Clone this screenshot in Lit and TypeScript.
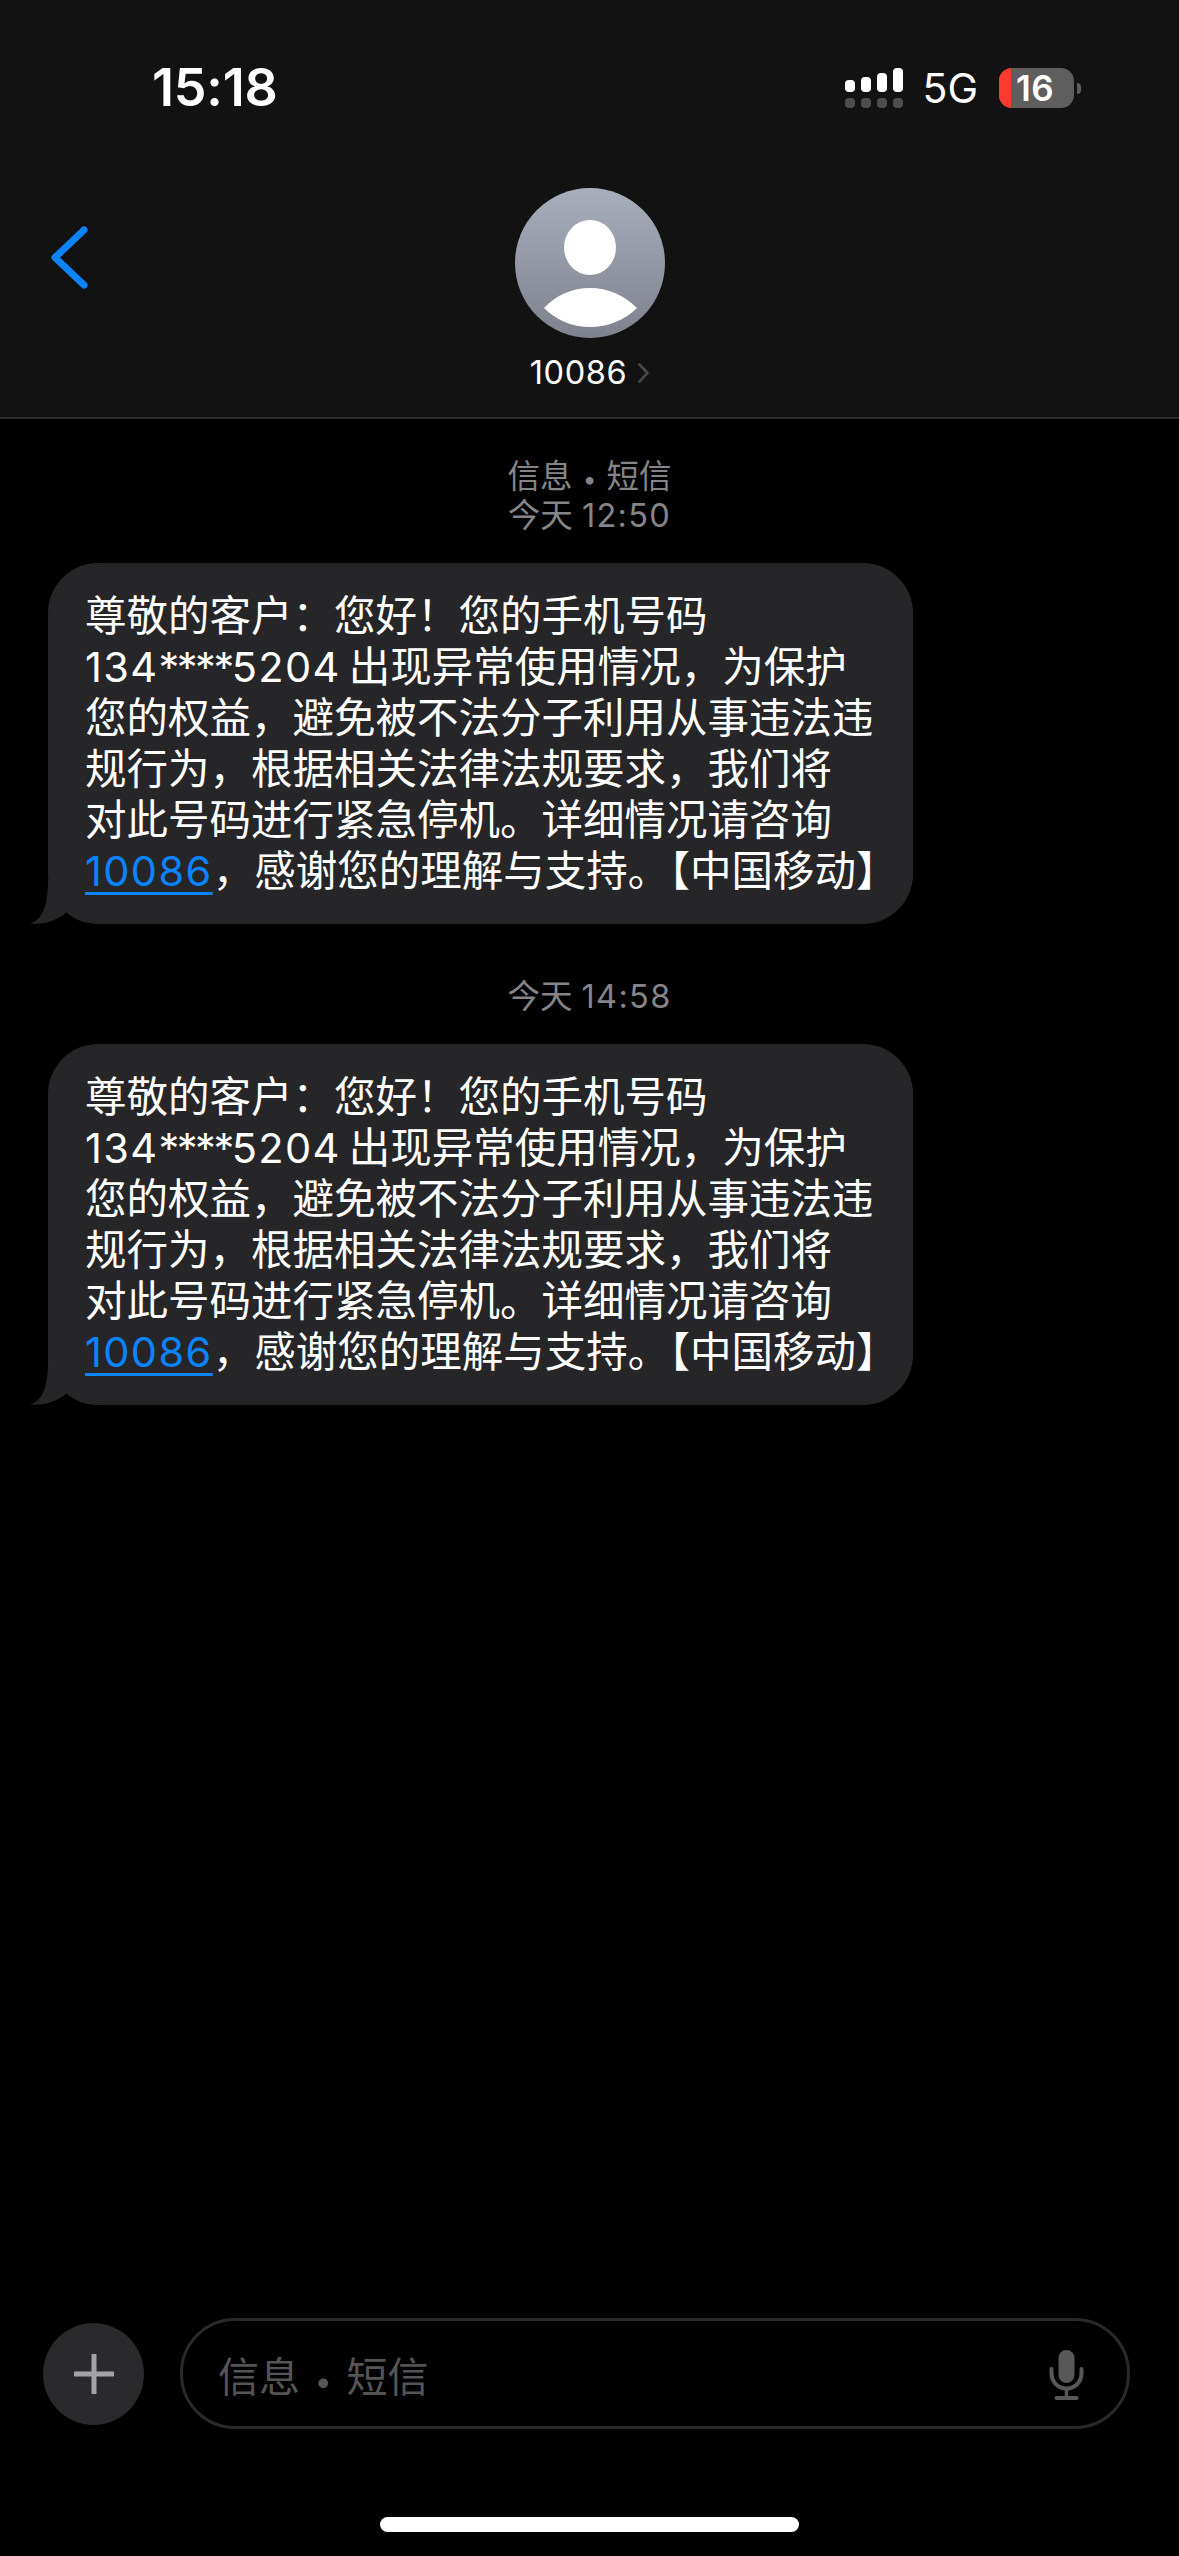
import { LitElement, html, css, svg } from 'lit';
import { customElement } from 'lit/decorators.js';

const BARS = [12, 15, 19, 24];

@customElement('app-root')
export class AppRoot extends LitElement {
  static styles = css`
    :host {
      display: block;
      width: 1179px;
      height: 2556px;
      overflow: hidden;
      background: #000;
      font-family: Inter, 'Noto Sans CJK SC', sans-serif;
      color: #fff;
    }
    .page {
      display: flex;
      flex-direction: column;
      height: 2556px;
    }

    /* header */
    .header {
      height: 417px;
      background: #121212;
      border-bottom: 2px solid #2a2a2a;
      flex: none;
    }
    .status {
      display: flex;
      justify-content: space-between;
      align-items: center;
      height: 48px;
      padding: 64px 98px 0 152px;
    }
    .time {
      font-size: 52px;
      font-weight: 600;
      line-height: 48px;
      letter-spacing: -0.2px;
    }
    .status-right {
      display: flex;
      align-items: center;
    }
    .signal {
      display: flex;
      flex-direction: column;
      gap: 6px;
      margin-right: 19px;
    }
    .signal-row {
      display: flex;
      gap: 6px;
      align-items: flex-end;
      height: 24px;
    }
    .signal-row.low {
      height: 10px;
    }
    .signal-row i {
      display: block;
      width: 10px;
      border-radius: 4px;
      background: #fff;
    }
    .signal-row.low i {
      height: 10px;
      background: #4d4d4d;
    }
    .net {
      font-size: 41px;
      font-weight: 400;
      line-height: 48px;
      margin-right: 21px;
    }
    .battery {
      position: relative;
      width: 75px;
      height: 40px;
      border-radius: 13px;
      overflow: hidden;
      background: #5e5e5e;
      display: flex;
      align-items: center;
      font-size: 35px;
      font-weight: 600;
      line-height: 40px;
      letter-spacing: 0.5px;
    }
    .battery .fill {
      width: 12px;
      height: 40px;
      background: #ff3b30;
      margin-right: 5px;
      flex: none;
    }
    .nub {
      width: 4px;
      height: 11px;
      margin-left: 3px;
      border-radius: 0 6px 6px 0;
      background: #5e5e5e;
    }
    .nav {
      display: grid;
      grid-template-columns: 1fr auto 1fr;
      margin-top: 76px;
    }
    .back {
      margin: 38px 0 0 50px;
      width: 38px;
      height: 63px;
    }
    .contact {
      display: flex;
      flex-direction: column;
      align-items: center;
    }
    .avatar {
      width: 150px;
      height: 150px;
      display: block;
    }
    .name {
      display: flex;
      align-items: center;
      gap: 11px;
      margin-top: 17px;
      font-size: 32.5px;
      line-height: 36px;
      letter-spacing: 0.6px;
    }
    .name svg {
      width: 11px;
      height: 20px;
    }

    /* messages */
    .thread {
      flex: 1;
      padding-top: 38px;
      display: flex;
      flex-direction: column;
    }
    .stamp {
      text-align: center;
      font-size: 32.5px;
      line-height: 39px;
      color: #858589;
    }
    .stamp.later {
      margin-top: 53px;
    }
    .stamp .num {
      letter-spacing: 1.3px;
    }
    .dot {
      font-size: 0.75em;
      line-height: 0;
      margin: 0 0.04em;
    }
    .bubble {
      position: relative;
      box-sizing: border-box;
      width: 865px;
      margin: 28px 0 0 48px;
      padding: 28px 0 27px 37px;
      border-radius: 50px;
      background: #262628;
      font-size: 41.5px;
      line-height: 51px;
      white-space: nowrap;
    }
    .bubble .line {
      display: block;
    }
    .num {
      letter-spacing: 1.4px;
    }
    .stars {
      letter-spacing: -2.5px;
    }
    .sp {
      margin-right: 8px;
    }
    .tail {
      position: absolute;
      left: -18px;
      bottom: 0;
      width: 40px;
      height: 44px;
    }
    .link {
      color: #0a84ff;
      text-decoration: underline;
      text-decoration-thickness: 3px;
      text-underline-offset: 6px;
      text-decoration-skip-ink: none;
    }

    /* composer */
    .composer {
      flex: none;
      display: flex;
      align-items: center;
      gap: 36px;
      padding: 0 49px 0 43px;
    }
    .plus {
      width: 101px;
      height: 102px;
      border-radius: 50%;
      background: #2a2a2c;
      display: flex;
      align-items: center;
      justify-content: center;
      flex: none;
    }
    .plus svg {
      width: 40px;
      height: 40px;
    }
    .input {
      flex: 1;
      box-sizing: border-box;
      height: 111px;
      border: 3px solid #2a2a2c;
      border-radius: 55px;
      display: flex;
      align-items: center;
      justify-content: space-between;
      padding: 0 42px 0 35px;
      font-size: 41px;
      color: #555557;
    }
    .input .dot {
      margin: 0 0.1em;
    }
    .mic {
      width: 36px;
      height: 50px;
      margin-top: 3px;
    }
    .home {
      flex: none;
      width: 419px;
      height: 15px;
      border-radius: 8px;
      background: #fff;
      margin: 88px auto 24px;
    }
  `;

  renderBubble() {
    return html`<div class="bubble">
      <span class="line">尊敬的客户：您好！您的手机号码</span>
      <span class="line"><span class="num">134</span><span class="stars">****</span><span class="num sp">5204</span>出现异常使用情况，为保护</span>
      <span class="line">您的权益，避免被不法分子利用从事违法违</span>
      <span class="line">规行为，根据相关法律法规要求，我们将</span>
      <span class="line">对此号码进行紧急停机。详细情况请咨询</span>
      <span class="line"><span class="link num">10086</span>，感谢您的理解与支持。【中国移动】</span>
      <svg class="tail" viewBox="0 0 40 44">
        <path d="M18 0C18 22 14 40 0 43.5C14 45 28 40 37 32L40 0Z" fill="#262628" />
      </svg>
    </div>`;
  }

  render() {
    return html`<div class="page">
      <div class="header">
        <div class="status">
          <div class="time">15:18</div>
          <div class="status-right">
            <div class="signal">
              <div class="signal-row">
                ${BARS.map((h) => html`<i style="height:${h}px"></i>`)}
              </div>
              <div class="signal-row low">${BARS.map(() => html`<i></i>`)}</div>
            </div>
            <div class="net">5G</div>
            <div class="battery"><div class="fill"></div>16</div>
            <div class="nub"></div>
          </div>
        </div>
        <div class="nav">
          <svg class="back" viewBox="0 0 38 63">
            <path d="M34 4L5 31.5L34 59" fill="none" stroke="#0a84ff" stroke-width="7" stroke-linecap="round" stroke-linejoin="round" />
          </svg>
          <div class="contact">
            <svg class="avatar" viewBox="0 0 150 150">
              <defs>
                <linearGradient id="av" x1="0" y1="0" x2="0" y2="1">
                  <stop offset="0" stop-color="#a9aebc" />
                  <stop offset="1" stop-color="#7e828e" />
                </linearGradient>
              </defs>
              <circle cx="75" cy="75" r="75" fill="url(#av)" />
              <ellipse cx="75" cy="59.5" rx="26" ry="27.5" fill="#fff" />
              <path d="M29 120C41 107 57 100 75 100C93 100 109 107 122 120C110 132 93 139 75 139C57 139 41 132 29 120Z" fill="#fff" />
            </svg>
            <div class="name">
              10086
              <svg viewBox="0 0 11 20">
                <path d="M1.5 1.5L9.5 10L1.5 18.5" fill="none" stroke="#48484a" stroke-width="2.6" stroke-linecap="round" stroke-linejoin="round" />
              </svg>
            </div>
          </div>
          <div></div>
        </div>
      </div>

      <div class="thread">
        <div class="stamp">信息 <span class="dot">•</span> 短信<br />今天 <span class="num">12:50</span></div>
        ${this.renderBubble()}
        <div class="stamp later">今天 <span class="num">14:58</span></div>
        ${this.renderBubble()}
      </div>

      <div class="composer">
        <div class="plus">
          <svg viewBox="0 0 40 40">
            <path d="M20 1V39M1 20H39" fill="none" stroke="#a3a3a5" stroke-width="5" stroke-linecap="round" />
          </svg>
        </div>
        <div class="input">
          <span>信息 <span class="dot">•</span> 短信</span>
          <svg class="mic" viewBox="0 0 36 50">
            ${svg`
              <rect x="9.5" y="0" width="16" height="33" rx="8" fill="#58585a" />
              <path d="M2.5 19V23C2.5 32 9 38.5 17.5 38.5C26 38.5 32.5 32 32.5 23V19" fill="none" stroke="#58585a" stroke-width="4" stroke-linecap="round" />
              <path d="M17.5 38.5V47" stroke="#58585a" stroke-width="3.5" />
              <rect x="5.5" y="46" width="24" height="4" rx="2" fill="#58585a" />
            `}
          </svg>
        </div>
      </div>
      <div class="home"></div>
    </div>`;
  }
}
